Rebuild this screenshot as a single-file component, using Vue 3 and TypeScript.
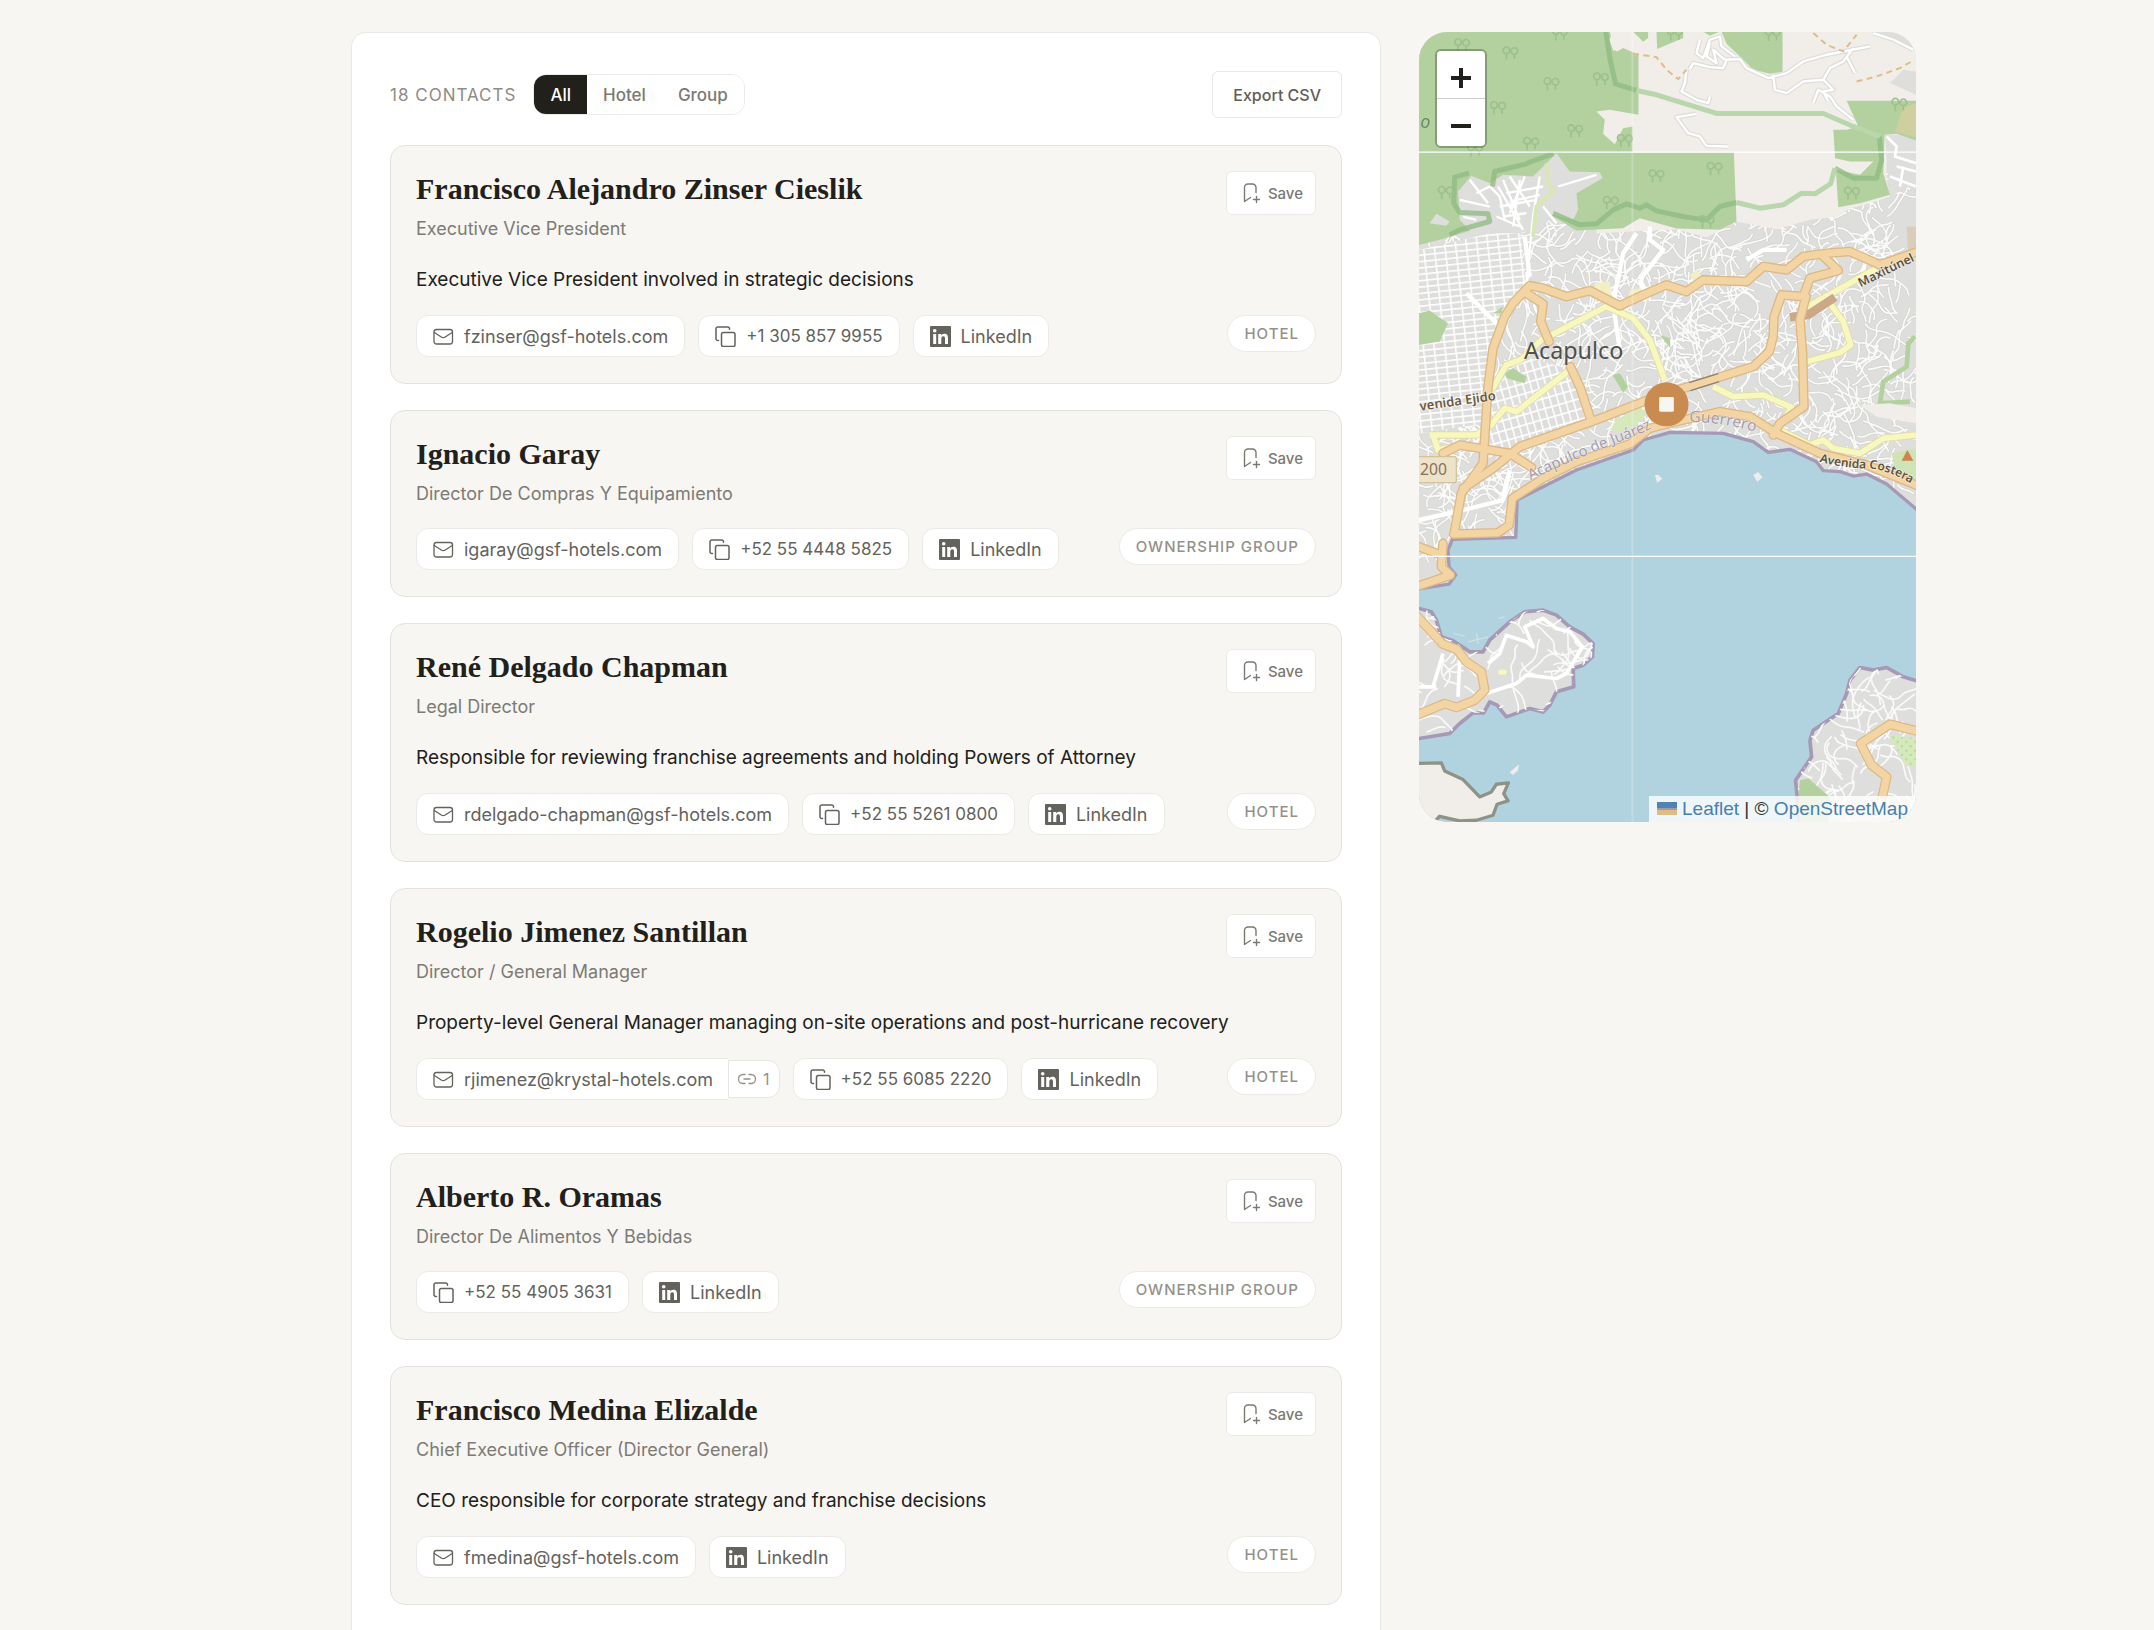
<script setup lang="ts">
import { computed, ref } from 'vue'

type Source = 'Hotel' | 'Group'
interface Contact {
  name: string
  role: string
  note?: string
  email?: string
  sources?: number
  phone?: string
  source: Source
}

const total = 18
const filters = ['All', 'Hotel', 'Group'] as const
const active = ref<(typeof filters)[number]>('All')

const contacts: Contact[] = [
  {
    name: 'Francisco Alejandro Zinser Cieslik',
    role: 'Executive Vice President',
    note: 'Executive Vice President involved in strategic decisions',
    email: 'fzinser@gsf-hotels.com',
    phone: '+1 305 857 9955',
    source: 'Hotel',
  },
  {
    name: 'Ignacio Garay',
    role: 'Director De Compras Y Equipamiento',
    email: 'igaray@gsf-hotels.com',
    phone: '+52 55 4448 5825',
    source: 'Group',
  },
  {
    name: 'René Delgado Chapman',
    role: 'Legal Director',
    note: 'Responsible for reviewing franchise agreements and holding Powers of Attorney',
    email: 'rdelgado-chapman@gsf-hotels.com',
    phone: '+52 55 5261 0800',
    source: 'Hotel',
  },
  {
    name: 'Rogelio Jimenez Santillan',
    role: 'Director / General Manager',
    note: 'Property-level General Manager managing on-site operations and post-hurricane recovery',
    email: 'rjimenez@krystal-hotels.com',
    sources: 1,
    phone: '+52 55 6085 2220',
    source: 'Hotel',
  },
  {
    name: 'Alberto R. Oramas',
    role: 'Director De Alimentos Y Bebidas',
    phone: '+52 55 4905 3631',
    source: 'Group',
  },
  {
    name: 'Francisco Medina Elizalde',
    role: 'Chief Executive Officer (Director General)',
    note: 'CEO responsible for corporate strategy and franchise decisions',
    email: 'fmedina@gsf-hotels.com',
    source: 'Hotel',
  },
]

const visible = computed(() =>
  active.value === 'All' ? contacts : contacts.filter((c) => c.source === active.value),
)

const sourceLabel: Record<Source, string> = { Hotel: 'HOTEL', Group: 'OWNERSHIP GROUP' }

// Side streets: short winding walks from a seeded generator, so the map never changes between loads.
let seed = 20240
const rand = () => {
  seed = (seed * 1664525 + 1013904223) % 4294967296
  return seed / 4294967296
}
const streets = (count: number, x0: number, y0: number, x1: number, y1: number): string => {
  let d = ''
  for (let i = 0; i < count; i++) {
    let x = x0 + rand() * (x1 - x0)
    let y = y0 + rand() * (y1 - y0)
    let a = rand() * Math.PI * 2
    d += `M${Math.round(x)} ${Math.round(y)}`
    const steps = 2 + Math.floor(rand() * 4)
    for (let s = 0; s < steps; s++) {
      const mx = x + Math.cos(a) * 14
      const my = y + Math.sin(a) * 14
      a += (rand() - 0.5) * 2
      x = mx + Math.cos(a) * 14
      y = my + Math.sin(a) * 14
      d += `Q${Math.round(mx)} ${Math.round(my)} ${Math.round(x)} ${Math.round(y)}`
    }
  }
  return d
}
const northStreets = streets(1250, 28, 450, 1518, 1640)
const westStreets = streets(80, 28, 1740, 560, 2160)
const eastStreets = streets(95, 1150, 1940, 1518, 2406)

const trees: [number, number][] = [
  [157, 75], [302, 100], [425, 192], [573, 178], [265, 264], [496, 333], [364, 371], [645, 362],
  [450, 42], [795, 42], [1088, 44], [740, 468], [914, 446], [603, 548], [1326, 520], [108, 518],
  [890, 606], [1468, 254], [196, 390],
]
</script>

<template>
  <main class="page">
    <section class="panel" aria-label="Contacts">
      <header class="toolbar">
        <span class="count">{{ total }} CONTACTS</span>
        <div class="segments" role="group" aria-label="Filter contacts">
          <button
            v-for="f in filters"
            :key="f"
            type="button"
            class="segment"
            :class="{ on: f === active }"
            :aria-pressed="f === active"
            @click="active = f"
          >{{ f }}</button>
        </div>
        <button type="button" class="export">Export CSV</button>
      </header>

      <div class="list">
        <article v-for="c in visible" :key="c.name" class="card">
          <div class="head">
            <div>
              <h2 class="name">{{ c.name }}</h2>
              <p class="role">{{ c.role }}</p>
            </div>
            <button type="button" class="save">
              <svg width="22" height="22" viewBox="0 0 22 22" fill="none" stroke="currentColor" stroke-width="1.4" stroke-linecap="round" stroke-linejoin="round" aria-hidden="true">
                <path d="M15 10.5V5.5a3.5 3.5 0 0 0-3.5-3.5H7A3.5 3.5 0 0 0 3.500 5.500V19.500L9.500 15.500" />
                <path d="M15.500 14.500v6M12.500 17.500h6" />
              </svg>
              Save
            </button>
          </div>
          <p v-if="c.note" class="note">{{ c.note }}</p>
          <div class="links">
            <div v-if="c.email" class="mail">
              <a class="chip" :class="{ joined: c.sources }" :href="`mailto:${c.email}`">
                <svg width="21" height="21" viewBox="0 0 21 21" fill="none" stroke="currentColor" stroke-width="1.3" stroke-linejoin="round" stroke-linecap="round" aria-hidden="true">
                  <rect x="1" y="3.500" width="18.500" height="14.500" rx="2.500" />
                  <path d="M1.300 6.500l7 4.500a3.500 3.500 0 0 0 3.900 0l7-4.500" />
                </svg>
                {{ c.email }}
              </a>
              <button v-if="c.sources" type="button" class="sources" aria-label="Sources">
                <svg width="18" height="18" viewBox="0 0 18 18" fill="none" stroke="currentColor" stroke-width="1.300" stroke-linecap="round" aria-hidden="true">
                  <path d="M7 4.500H5a4.500 4.500 0 0 0 0 9h2M11 4.500h2a4.500 4.500 0 0 1 0 9h-2M6 9h6" />
                </svg>
                {{ c.sources }}
              </button>
            </div>
            <button v-if="c.phone" type="button" class="chip phone">
              <svg width="21" height="21" viewBox="0 0 21 21" fill="none" stroke="currentColor" stroke-width="1.500" stroke-linejoin="round" stroke-linecap="round" aria-hidden="true">
                <rect x="6.500" y="6.500" width="13.500" height="14" rx="1.800" />
                <path d="M3.500 14.500h-.7A1.800 1.800 0 0 1 1 12.700V2.800A1.800 1.800 0 0 1 2.800 1h9.900a1.800 1.800 0 0 1 1.800 1.800v.4" />
              </svg>
              {{ c.phone }}
            </button>
            <a class="chip" href="#linkedin">
              <svg width="21" height="21" viewBox="0 0 21 21" aria-hidden="true">
                <rect width="21" height="21" rx="1" fill="currentColor" />
                <g fill="#fff">
                  <circle cx="4.700" cy="4.700" r="1.800" />
                  <rect x="3.200" y="8" width="3" height="10" />
                  <path d="M8.200 8h2.900v1.400c.5-.9 1.600-1.700 3.200-1.700 3.100 0 3.700 2 3.700 4.700V18h-3v-5c0-1.200 0-2.700-1.700-2.700s-2 1.300-2 2.600V18H8.200z" />
                </g>
              </svg>
              LinkedIn
            </a>
            <span class="tag">{{ sourceLabel[c.source] }}</span>
          </div>
        </article>
      </div>
    </section>

    <aside class="map" aria-label="Map">
      <svg class="canvas" viewBox="28 36 1490 2370" preserveAspectRatio="xMidYMid slice" aria-hidden="true">
        <defs>
          <pattern id="blocks" width="32" height="19" patternUnits="userSpaceOnUse" patternTransform="rotate(-6)">
            <path d="M0 2H32M2 0V19" stroke="#fff" stroke-width="5" />
          </pattern>
          <pattern id="blocks2" width="22" height="30" patternUnits="userSpaceOnUse" patternTransform="rotate(-16)">
            <path d="M0 2H22M2 0V30" stroke="#fff" stroke-width="5" />
          </pattern>
          <pattern id="dots" width="26" height="26" patternUnits="userSpaceOnUse">
            <rect width="26" height="26" fill="#d5e9bb" />
            <circle cx="7" cy="7" r="3" fill="#a9cf9b" /><circle cx="20" cy="20" r="3" fill="#a9cf9b" />
          </pattern>
          <path id="west" d="M-20 1755L28 1765 65 1775 80 1800 95 1850 130 1862 180 1895 220 1895 240 1860 300 1805 345 1775 400 1770 440 1785 480 1820 520 1842 550 1870 548 1910 520 1935 490 1945 492 2000 440 2015 420 2055 400 2075 360 2065 290 2090 262 2055 240 2045 222 2078 190 2078 150 2110 120 2140 28 2155-20 2155Z" />
          <path id="east" d="M1540 1988L1480 1970 1430 1942 1390 1950 1350 1942 1320 1980 1310 2020 1285 2080 1210 2130 1200 2160 1205 2210 1157 2280 1170 2420H1540Z" />
          <clipPath id="westClip"><use href="#west" /></clipPath>
          <clipPath id="eastClip"><use href="#east" /></clipPath>
          <path id="tree" d="M-12 -18a10 10 0 1 0 .1 0M-12 2V20M12 -16a10 10 0 1 0 .1 0M12 4V18" fill="none" stroke="#9cc18b" stroke-width="5" />
          <path id="trails" d="M830 150L825 190 815 215 860 240 895 250 900 230M840 148L850 130 900 142 940 145 950 120 990 118 1010 145 1075 175 1130 160 1180 125 1250 105 1380 80M870 60L860 100 880 115 900 60 930 50 935 80 975 110M900 70L890 110 920 130 910 90 945 120M1090 165L1095 210 1130 220 1180 185 1240 180 1260 145 1300 125 1330 85M1210 250L1225 210 1260 230 1280 260M1310 110L1335 160M1240 180L1270 210 1240 215 1255 245M1390 40L1450 60 1510 90M860 282L800 292 835 340 870 350 890 378 955 380M1280 260L1330 300" />
          <path id="juarez" d="M362 1380Q560 1290 640 1262T800 1180" />
          <path id="guerrero" d="M838 1206Q950 1206 1070 1246" />
          <path id="costera" d="M1228 1325Q1300 1345 1370 1345T1560 1425" />
        </defs>

        <rect x="28" y="36" width="1490" height="2370" fill="#dededc" />
        <path :d="northStreets" fill="none" stroke="#d3d3d1" stroke-width="9" stroke-linecap="round" />
        <path :d="northStreets" fill="none" stroke="#fafaf9" stroke-width="5" stroke-linecap="round" />
        <path d="M28 690L200 650 330 620 350 790 260 920 230 1210 28 1240Z" fill="#dededc" />
        <path d="M28 690L200 650 330 620 350 790 260 920 230 1210 28 1240Z" fill="url(#blocks)" />
        <path d="M340 1010L490 1050 545 1205 240 1310 240 1130Z" fill="#dededc" />
        <path d="M340 1010L490 1050 545 1205 240 1310 240 1130Z" fill="url(#blocks2)" />

        <path d="M560 36H1518V360H1430V480L1440 530 1380 550 1320 565 1285 590 1200 600 1100 628 980 605 890 652 800 628 560 640Z" fill="#f1eeea" />
        <path d="M1425 345H1518V490L1440 530Z" fill="#dededc" />
        <path d="M1430 350L1460 380 1455 410 1518 430M1460 440L1518 455M1440 470L1518 500M1480 440L1470 500" fill="none" stroke="#fff" stroke-width="8" />
        <path d="M1380 36H1518V95L1440 60ZM1440 190L1480 150 1518 155V225Z" fill="#dededc" />
        <path d="M28 36H600L612 90 622 95 640 85 686 105V285L600 270 560 275 585 300 580 342 615 373 640 325 668 320V398H972L980 605 930 630 800 626 690 595 640 625 500 632 430 590 350 600 190 630 90 660 28 675Z" fill="#b3d19f" />
        <path d="M740 36H820V55L742 88ZM670 36H715V55L700 66ZM935 36H1118V156L1080 162 1030 150 990 110 950 72ZM1310 243H1518V362L1460 342 1424 345 1420 460 1440 525 1350 550 1285 562 1270 330H1310L1345 320ZM880 36H930L900 48Z" fill="#b3d19f" />
        <path d="M1480 265L1518 250V352L1455 335Z" fill="#cfcf9f" />
        <path d="M598 60L612 36H650L680 92 650 80 625 45 612 95ZM1275 415L1320 425 1390 425 1350 465 1275 450Z" fill="#f1eeea" />
        <path d="M145 515L185 468 240 490 280 465 370 470 410 430 440 400 480 455 570 457 578 475 500 520 505 570 490 600 430 585 400 620 330 640 190 640 150 600ZM60 610L80 582 120 605 110 618Z" fill="#dededc" />
        <path d="M180 480L235 550M200 520L240 500 270 530 285 600M280 480L330 600M300 470L360 560M390 470L370 590 350 790M290 520L400 500M270 560L380 540M280 590L350 580M400 560L440 610M330 480L310 620M445 500L560 465M160 590L200 600M150 540L240 560M265 500L340 630M345 470L300 580M300 545L390 525M260 590L330 620" fill="none" stroke="#fff" stroke-width="7" />
        <g fill="none" stroke="#8db981" stroke-width="15" stroke-opacity=".75" stroke-linejoin="round">
          <path d="M588 36L600 115 617 192 680 212" />
          <path d="M430 402L365 425 350 432 255 455 248 500M178 460L135 472 132 550 150 578 235 582 240 605 150 630 120 645" />
          <path d="M430 580L510 615 560 612 610 570 650 552 690 565 710 555 740 573 830 592 890 600 930 560 980 548" />
          <path d="M1275 445L1330 475 1400 475 1415 420 1408 350" />
        </g>
        <path d="M680 212L740 225 920 281H1240L1330 320 1410 350M980 548L1050 565 1120 555 1175 520 1215 522 1262 492 1275 445" fill="none" stroke="#b9d6ad" stroke-width="15" stroke-linejoin="round" />
        <use v-for="([x, y], i) in trees" :key="i" href="#tree" :x="x" :y="y" />
        <use href="#trails" fill="none" stroke="#dcdcda" stroke-width="14" stroke-linejoin="round" />
        <use href="#trails" fill="none" stroke="#fff" stroke-width="7" stroke-linejoin="round" />
        <path d="M670 102L740 112 770 150 805 178 830 150M1210 40L1250 75 1300 95 1340 45M1340 185L1400 170 1470 145 1505 125" fill="none" stroke="#e0bd88" stroke-width="6" stroke-dasharray="18 13" />
        <path d="M410 430L415 490 430 515 380 560 370 650" fill="none" stroke="#d8e8b4" stroke-width="12" />
        <path d="M28 880L60 872 115 910 90 965 28 975Z" fill="#b3d19f" />
        <path d="M600 1230L620 1200 690 1160 712 1180 680 1215 640 1235Z" fill="#d5e9bb" />
        <path d="M285 1060L310 1045 350 1070 345 1090 290 1075ZM608 1065L630 1060 655 1100 640 1118ZM750 945L780 955 782 985ZM250 880L280 860 275 880Z" fill="#b3d19f" />
        <path d="M1445 1300L1518 1285V1385L1455 1350Z" fill="#cfe4b4" />
        <path d="M1515 950L1495 970 1490 1040 1420 1085 1410 1150 1500 1145" fill="none" stroke="#b3d19f" stroke-width="14" />
        <path d="M555 790L600 785 605 835 555 830ZM660 810L720 800 715 840 655 840ZM840 765L860 750 876 770 850 782Z" fill="#f3efc4" />
        <path d="M1490 620H1518V710H1495Z" fill="#d9cdbb" />
        <path d="M1350 1155L1440 1150 1518 1165V1210L1400 1190Z" fill="#f1eeea" />
        <path d="M630 990L610 850 640 700 680 640M690 780L760 690 720 660 720 620M690 780L700 805 720 810M1010 720L1060 690 1130 690M345 650L360 770M170 820L280 930M28 1500L160 1470 280 1440 300 1350" fill="none" stroke="#fff" stroke-width="13" stroke-linejoin="round" />

        <g fill="none" stroke-linejoin="round">
          <path id="minor" d="M1400 745L1310 795 1190 862M1245 830L1300 905 1322 975 1290 998 1190 1025M240 1120L290 1035 335 1018 400 955M425 945L590 860 670 895 720 960 765 1080M240 1220L285 1165 320 1175 480 1050M60 1245H200L240 1220M70 1245L85 1290 130 1280M910 1100L970 1130 1060 1125 1145 1162 1115 1210M1110 1230L1200 1275 1240 1260 1270 1285 1350 1300 1420 1255 1518 1245" stroke="#e3d9a6" stroke-width="22" />
          <path d="M1400 745L1310 795 1190 862M1245 830L1300 905 1322 975 1290 998 1190 1025M240 1120L290 1035 335 1018 400 955M425 945L590 860 670 895 720 960 765 1080M240 1220L285 1165 320 1175 480 1050M60 1245H200L240 1220M70 1245L85 1290 130 1280M910 1100L970 1130 1060 1125 1145 1162 1115 1210M1110 1230L1200 1275 1240 1260 1270 1285 1350 1300 1420 1255 1518 1245" stroke="#f6f8be" stroke-width="17" />
          <path d="M1140 892L1195 885 1275 832" stroke="#caa888" stroke-width="26" />
        </g>

        <path d="M118 1640L115 1590 128 1558 318 1552 322 1440 400 1400 500 1350 670 1290 700 1260 780 1237 940 1240 1030 1265 1075 1297 1140 1288 1220 1325 1240 1352 1290 1355 1330 1368 1370 1362 1430 1392 1540 1485V2420H-10V1712L118 1692 138 1665Z" fill="#b1d2df" stroke="#a599b5" stroke-width="10" stroke-linejoin="round" />

        <g fill="none" stroke-linejoin="round" stroke-linecap="round">
          <g stroke="#dcb887" stroke-width="29">
            <path d="M1518 697L1410 735 1320 695 1250 700 1180 710 1130 750 1060 740 1010 785 880 780 830 815 770 795 700 825 630 858 540 812 470 830 400 805 360 797 310 850 285 890 250 985 235 1100 220 1330 155 1420 135 1530" />
            <path d="M28 1580L95 1605M100 1570L95 1640 122 1665 28 1697M132 1542L265 1538 298 1515 308 1435 400 1375 500 1325 660 1272 720 1225 800 1205 930 1175 1020 1190 1100 1240 1230 1300 1370 1335 1530 1400" />
            <path d="M160 1405L250 1345 330 1280 545 1205 700 1145 830 1102 1030 1040 1078 995 1090 950 1092 890 1115 825 1180 830 1200 775 1285 752 1240 710M1188 830L1170 900 1178 1000 1182 1160 1110 1210 1090 1245M350 820L400 852 393 905 418 965M482 1040L512 1105 545 1205M100 1300L150 1275 300 1300 365 1342" />
          </g>
          <g stroke="#f3d5a4" stroke-width="21">
            <path d="M1518 697L1410 735 1320 695 1250 700 1180 710 1130 750 1060 740 1010 785 880 780 830 815 770 795 700 825 630 858 540 812 470 830 400 805 360 797 310 850 285 890 250 985 235 1100 220 1330 155 1420 135 1530" />
            <path d="M28 1580L95 1605M100 1570L95 1640 122 1665 28 1697M132 1542L265 1538 298 1515 308 1435 400 1375 500 1325 660 1272 720 1225 800 1205 930 1175 1020 1190 1100 1240 1230 1300 1370 1335 1530 1400" />
            <path d="M160 1405L250 1345 330 1280 545 1205 700 1145 830 1102 1030 1040 1078 995 1090 950 1092 890 1115 825 1180 830 1200 775 1285 752 1240 710M1188 830L1170 900 1178 1000 1182 1160 1110 1210 1090 1245M350 820L400 852 393 905 418 965M482 1040L512 1105 545 1205M100 1300L150 1275 300 1300 365 1342" />
          </g>
        </g>
        <path d="M838 1088L925 1061M842 1112L928 1085" stroke="#8b8279" stroke-width="4" />

        <use href="#west" fill="#dededc" stroke="#a599b5" stroke-width="11" stroke-linejoin="round" />
        <use href="#east" fill="#dededc" stroke="#a599b5" stroke-width="11" stroke-linejoin="round" />
        <g clip-path="url(#westClip)" fill="none">
          <path :d="westStreets" stroke="#fafaf9" stroke-width="5" stroke-linecap="round" />
          <path d="M235 1930L270 1900 290 1845 350 1865 370 1880 345 1820 400 1795 440 1825 480 1835 518 1880 470 1960 440 1975 350 1965 320 1990 230 2020M100 1900L70 2000M150 1920L145 2030M28 2000L80 2000" stroke="#fff" stroke-width="11" stroke-linejoin="round" />
          <path d="M10 1775L100 1872 142 1888 170 1925 215 1955 225 2010 195 2040 140 2062 105 2050 10 2090" stroke="#dcb887" stroke-width="29" stroke-linejoin="round" />
          <path d="M10 1775L100 1872 142 1888 170 1925 215 1955 225 2010 195 2040 140 2062 105 2050 10 2090" stroke="#f3d5a4" stroke-width="22" stroke-linejoin="round" />
        </g>
        <ellipse cx="278" cy="1956" rx="13" ry="8" fill="#f6f8be" />
        <g clip-path="url(#eastClip)" fill="none">
          <path :d="eastStreets" stroke="#fafaf9" stroke-width="5" stroke-linecap="round" />
          <path d="M1170 2280L1195 2275 1260 2330 1255 2420H1160Z" fill="#b3d19f" />
          <path d="M1435 2145L1530 2155V2238H1490Z" fill="url(#dots)" />
          <path d="M1530 2135L1440 2112 1352 2170 1385 2235 1430 2270 1415 2340" stroke="#dcb887" stroke-width="29" stroke-linejoin="round" />
          <path d="M1530 2135L1440 2112 1352 2170 1385 2235 1430 2270 1415 2340" stroke="#f3d5a4" stroke-width="22" stroke-linejoin="round" />
        </g>
        <path d="M10 2230L95 2228 105 2252 160 2278 210 2330 245 2315 260 2292 296 2288 282 2320 295 2342 262 2352 250 2385 200 2400 150 2402 90 2388 60 2420H10Z" fill="#f1eeea" stroke="#8f9286" stroke-width="10" stroke-linejoin="round" />
        <path d="M300 2256L328 2232 325 2250 310 2264ZM735 1366L745 1364 758 1376 742 1388ZM1030 1365L1045 1356 1058 1372 1042 1385Z" fill="#efedea" />
        <path d="M130 1840L165 1848M175 1865L235 1850M200 1840L205 1870M265 1795L285 1790" stroke="#d0e0e4" stroke-width="4" />

        <g stroke="#fff">
          <path d="M28 397H1518M28 1609H1518" stroke-width="4" />
          <path d="M668 36V2406" stroke-width="6" stroke-opacity=".22" />
        </g>

        <g class="maptext">
          <text x="343" y="1016" font-size="70" fill="#505050">Acapulco</text>
          <text x="32" y="1172" font-size="39" fill="#6b5a3e" stroke-width="5" font-weight="600" transform="rotate(-8 32 1172)">venida Ejido</text>
          <text x="1352" y="802" font-size="37" fill="#5c5240" stroke-width="4" font-weight="600" transform="rotate(-26 1352 802)">Maxitúnel</text>
          <text x="32" y="325" font-size="54" fill="#6a8a5e" font-style="italic">o</text>
          <text font-size="45" fill="#a69ba9" stroke-width="3"><textPath href="#juarez">Acapulco de Juárez</textPath></text>
          <text font-size="47" fill="#a69ba9" stroke-width="3"><textPath href="#guerrero">Guerrero</textPath></text>
          <text font-size="36" fill="#5c5240" stroke-width="4" font-weight="600"><textPath href="#costera">Avenida Costera</textPath></text>
          <rect x="16" y="1310" width="124" height="78" rx="6" fill="#ede3c8" stroke="#d3c39c" stroke-width="4" />
          <text class="plain" x="31" y="1366" font-size="47" fill="#85715c">200</text>
        </g>
        <path d="M1475 1322L1492 1290 1510 1322Z" fill="#d0824f" />

        <circle cx="770" cy="1153" r="66" fill="#c98b4f" />
        <rect x="748" y="1131" width="44" height="44" rx="4" fill="#f7f6f2" />
      </svg>

      <div class="zoom">
        <button type="button" aria-label="Zoom in">
          <svg width="20" height="20" viewBox="0 0 20 20" aria-hidden="true"><path d="M0 10H20M10 0V20" stroke="#22201a" stroke-width="4" /></svg>
        </button>
        <button type="button" aria-label="Zoom out">
          <svg width="20" height="20" viewBox="0 0 20 20" aria-hidden="true"><path d="M0 10H20" stroke="#22201a" stroke-width="4" /></svg>
        </button>
      </div>
      <p class="credit">
        <svg class="flag" width="20" height="13" viewBox="0 0 20 13" aria-hidden="true">
          <path d="M0 0H20V6H0Z" fill="#4c84b4" /><path d="M0 6H20V8H0Z" fill="#a39aa8" /><path d="M0 8H20V13H0Z" fill="#dfbd82" />
        </svg>
        <a href="#leaflet">Leaflet</a> | © <a href="#osm">OpenStreetMap</a>
      </p>
    </aside>
  </main>
</template>

<style>
body {
  background: #f7f6f2;
}
</style>

<style scoped>
.page {
  box-sizing: border-box;
  min-height: 100vh;
  display: grid;
  grid-template-columns: minmax(0, 1fr) 497px;
  gap: 38px;
  padding: 32px 238px 0 351px;
  background: #f7f6f2;
  color: #22201a;
  font-family: Inter, "Liberation Sans", sans-serif;
}
button {
  font: inherit;
  color: inherit;
  cursor: pointer;
}
h2,
p {
  margin: 0;
}
.panel {
  box-sizing: border-box;
  padding: 38px 38px 25px;
  background: #fff;
  border: 1px solid #e9e8e5;
  border-bottom: 0;
  border-radius: 15px 15px 0 0;
}
.toolbar {
  display: flex;
  align-items: center;
  margin-bottom: 27px;
}
.count {
  font-size: 17px;
  letter-spacing: 1px;
  color: #8e8c85;
}
.segments {
  display: flex;
  margin-left: 17px;
  border: 1px solid #ebebe9;
  border-radius: 13px;
  overflow: hidden;
}
.segment {
  height: 39px;
  padding: 0 16px;
  border: 0;
  background: #fff;
  color: #7b7972;
  font-size: 17px;
  font-weight: 500;
}
.segment.on {
  background: #22201a;
  color: #fff;
}
.export {
  height: 47px;
  margin-left: auto;
  padding: 0 20px;
  background: #fff;
  border: 1px solid #e9e8e6;
  border-radius: 6px;
  color: #5f5d56;
  font-size: 16px;
  font-weight: 500;
}
.list {
  display: flex;
  flex-direction: column;
  gap: 26px;
}
.card {
  padding: 25px 25px 26px;
  background: #f7f6f2;
  border: 1px solid #e3e2df;
  border-radius: 15px;
}
.head {
  display: flex;
  justify-content: space-between;
  align-items: flex-start;
}
.name {
  font-family: "Liberation Serif", serif;
  font-size: 30px;
  font-weight: 700;
  line-height: 36px;
}
.role {
  margin-top: 7px;
  font-size: 18px;
  line-height: 30px;
  color: #7d7b75;
}
.save {
  display: flex;
  align-items: center;
  gap: 5px;
  height: 44px;
  padding: 0 12px 0 14px;
  background: #fff;
  border: 1px solid #ebeae7;
  border-radius: 6px;
  color: #7b7972;
  font-size: 15px;
  font-weight: 500;
}
.note {
  margin-top: 20px;
  font-size: 19px;
  line-height: 32px;
}
.links {
  display: flex;
  align-items: flex-start;
  gap: 13px;
  margin-top: 19px;
}
.mail {
  display: flex;
  align-items: center;
}
.chip {
  box-sizing: border-box;
  display: flex;
  align-items: center;
  gap: 10px;
  height: 42px;
  padding: 0 16px;
  background: #fff;
  border: 1px solid #ebeae7;
  border-radius: 12px;
  color: #64625c;
  font-size: 18px;
  text-decoration: none;
}
.chip.phone {
  font-size: 17px;
}
.chip.joined {
  padding-right: 15px;
  border-right: 0;
  border-radius: 12px 0 0 12px;
}
.sources {
  display: flex;
  align-items: center;
  gap: 7px;
  height: 38px;
  padding: 0 9px;
  background: #fff;
  border: 1px solid #e7e6e3;
  border-radius: 0 12px 12px 0;
  color: #93918a;
  font-size: 16px;
}
.tag {
  box-sizing: border-box;
  height: 37px;
  margin-left: auto;
  padding: 0 16px;
  background: #fff;
  border: 1px solid #ebeae7;
  border-radius: 19px;
  color: #93918a;
  font-size: 15px;
  font-weight: 500;
  line-height: 35px;
  letter-spacing: 1px;
}
.map {
  position: relative;
  align-self: start;
  height: 790px;
  overflow: hidden;
  border-radius: 28px;
}
.canvas {
  display: block;
  width: 100%;
  height: 100%;
}
.maptext text {
  font-family: "Noto Sans", sans-serif;
  paint-order: stroke;
  stroke: rgba(255, 255, 255, 0.65);
  stroke-linejoin: round;
}
.maptext .plain {
  stroke: none;
}
.zoom {
  position: absolute;
  top: 17px;
  left: 16px;
  border: 2px solid rgba(0, 0, 0, 0.25);
  border-radius: 6px;
  background-clip: padding-box;
}
.zoom button {
  display: flex;
  align-items: center;
  justify-content: center;
  width: 48px;
  height: 47px;
  padding: 6px 0 0;
  border: 0;
  border-radius: 4px 4px 0 0;
  background: #fff;
}
.zoom button + button {
  height: 48px;
  border-top: 1px solid #ccc;
  border-radius: 0 0 4px 4px;
}
.credit {
  position: absolute;
  right: 0;
  bottom: 0;
  padding: 0 8px;
  background: rgba(255, 255, 255, 0.8);
  color: #333;
  font: 19px/26px "Liberation Sans", sans-serif;
  white-space: nowrap;
}
.flag {
  margin-right: 5px;
}
.credit a {
  color: #4680b0;
  text-decoration: none;
}
</style>
